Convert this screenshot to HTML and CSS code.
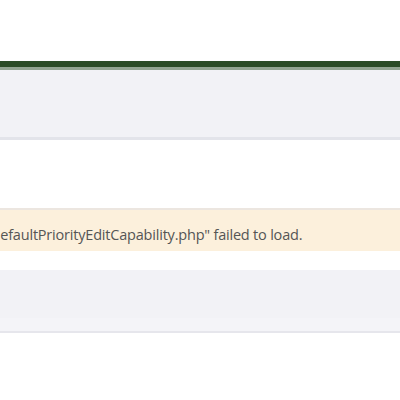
FILE: index.html
```html
<!DOCTYPE html>
<html lang="en">
<head>
    <meta charset="UTF-8">
    <title>Module error</title>
    <link rel="stylesheet" href="styles.css">
</head>
<body>
    <div class="top-space"></div>
    <div class="header-bar"></div>
    <div class="toolbar"></div>
    <div class="gap-one"></div>
    <div class="notice">
        <p class="notice-text">"defaultPriorityEditCapability.php" failed to load.</p>
    </div>
    <div class="gap-two"></div>
    <div class="panel"></div>
</body>
</html>
```

FILE: styles.css
```css
body {
    margin: 0;
    background: #ffffff;
    font-family: 'Open Sans', 'Segoe UI', sans-serif;
    overflow: hidden;
}

.top-space {
    height: 61px;
}

.header-bar {
    height: 6px;
    background: #2b4c26;
    border-bottom: 3px solid #93a592;
}

.toolbar {
    height: 67px;
    background: #f2f2f6;
    border-bottom: 3px solid #e3e4ea;
}

.gap-one {
    height: 68px;
}

.notice {
    height: 43px;
    background: #fcf0dc;
    border-top: 2px solid #ece6e0;
    padding-top: 7px;
    box-sizing: border-box;
    display: flex;
    align-items: center;
    overflow: hidden;
}

.notice-text {
    margin: 0 0 0 -14px;
    font-size: 14.5px;
    letter-spacing: -0.2px;
    color: #555555;
    white-space: nowrap;
}

.gap-two {
    height: 19px;
}

.panel {
    height: 48px;
    background: #f2f2f6;
    border-bottom: 2px solid #e6e6ec;
    padding-bottom: 13px;
    box-shadow: inset 0 -13px 0 #f4f4f8;
}
```
